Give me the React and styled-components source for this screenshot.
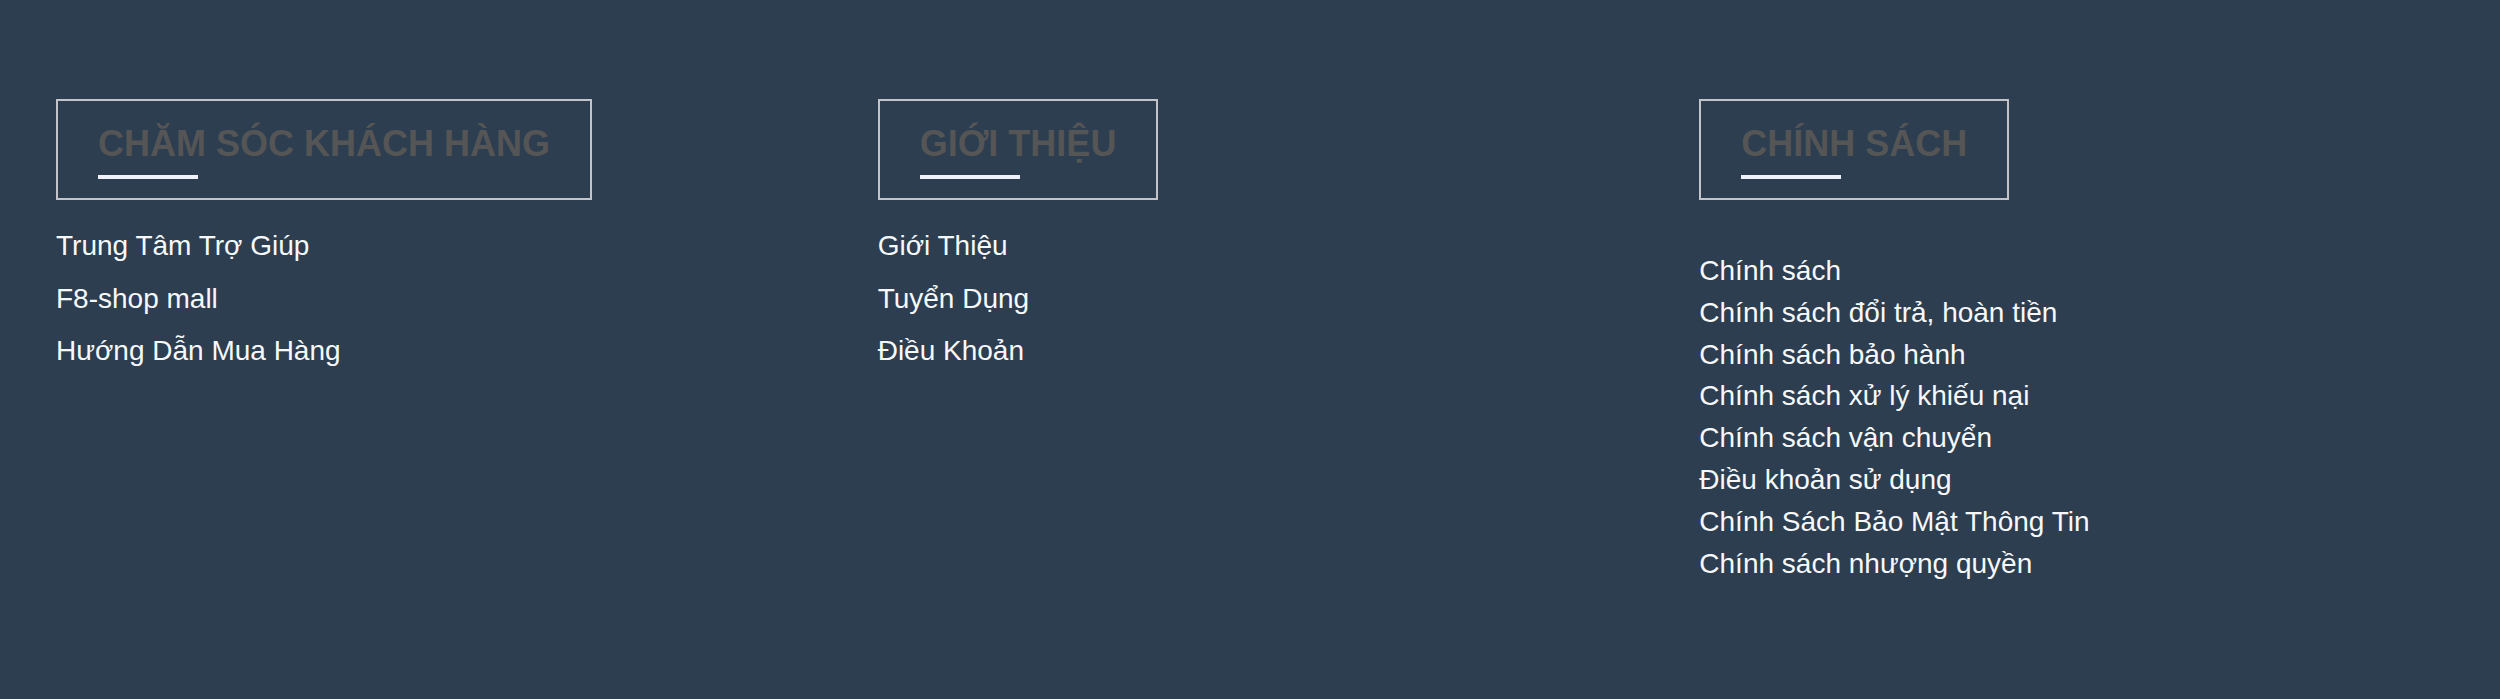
import React from "react";
import styled, { createGlobalStyle } from "styled-components";

const GlobalStyle = createGlobalStyle`
  html, body {
    margin: 0;
    padding: 0;
    background: #2c3e50;
  }
  body {
    font-family: "Liberation Sans", Arial, sans-serif;
  }
`;

const Footer = styled.footer`
  box-sizing: border-box;
  min-height: 699px;
  background: #2c3e50;
  padding: 99px 56px 0 56px;
  display: grid;
  grid-template-columns: repeat(3, 1fr);
  column-gap: 77px;
  align-items: start;
`;

const Column = styled.section`
  display: flex;
  flex-direction: column;
  align-items: flex-start;
`;

const HeadingBox = styled.div`
  box-sizing: border-box;
  border: 2px solid #c4c4c8;
  padding: 22px 40px 19px 40px;
`;

const Heading = styled.h3`
  margin: 0;
  font-family: "Liberation Sans", Arial, sans-serif;
  font-size: 36px;
  font-weight: 700;
  line-height: normal;
  color: #555555;
  text-transform: uppercase;
  white-space: nowrap;
`;

const Underline = styled.div`
  width: 100px;
  height: 4px;
  margin-top: 10px;
  background: #eef0fc;
`;

const LinkList = styled.ul`
  list-style: none;
  margin: ${(p) => (p.$loose ? "50px" : "20px")} 0 0 0;
  padding: 0;
`;

const LinkItem = styled.li`
  font-size: 28px;
  line-height: ${(p) => (p.$loose ? "41.8px" : "52.5px")};
  color: #f7f8fa;
  white-space: nowrap;
`;

const columns = [
  {
    title: "Chăm sóc khách hàng",
    loose: false,
    links: ["Trung Tâm Trợ Giúp", "F8-shop mall", "Hướng Dẫn Mua Hàng"],
  },
  {
    title: "Giới thiệu",
    loose: false,
    links: ["Giới Thiệu", "Tuyển Dụng", "Điều Khoản"],
  },
  {
    title: "Chính sách",
    loose: true,
    links: [
      "Chính sách",
      "Chính sách đổi trả, hoàn tiền",
      "Chính sách bảo hành",
      "Chính sách xử lý khiếu nại",
      "Chính sách vận chuyển",
      "Điều khoản sử dụng",
      "Chính Sách Bảo Mật Thông Tin",
      "Chính sách nhượng quyền",
    ],
  },
];

export default function App() {
  return (
    <>
      <GlobalStyle />
      <Footer>
        {columns.map((col) => (
          <Column key={col.title}>
            <HeadingBox>
              <Heading>{col.title}</Heading>
              <Underline />
            </HeadingBox>
            <LinkList $loose={col.loose}>
              {col.links.map((l) => (
                <LinkItem key={l} $loose={col.loose}>
                  {l}
                </LinkItem>
              ))}
            </LinkList>
          </Column>
        ))}
      </Footer>
    </>
  );
}
